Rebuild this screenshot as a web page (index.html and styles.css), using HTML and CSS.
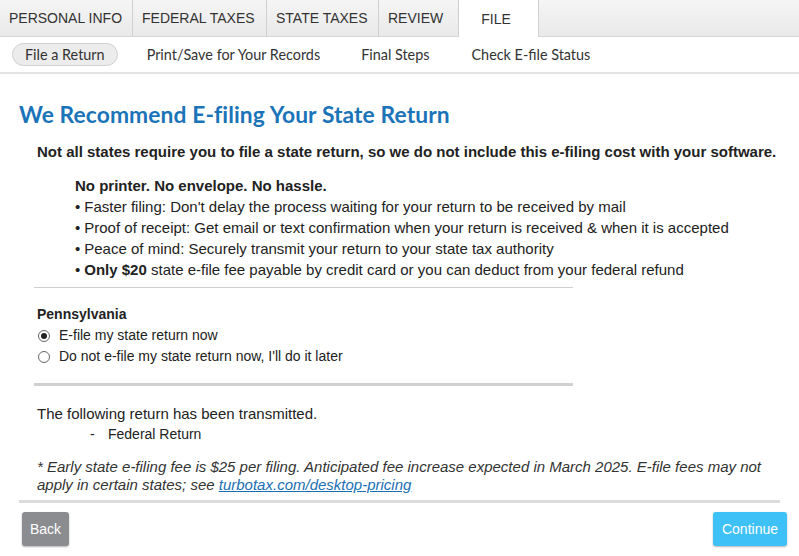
FILE: index.html
```html
<!DOCTYPE html>
<html lang="en">
<head>
<meta charset="utf-8">
<title>File</title>
<link rel="stylesheet" href="styles.css">
</head>
<body>
<nav class="tabs">
  <div class="tab">PERSONAL INFO</div>
  <div class="tab">FEDERAL TAXES</div>
  <div class="tab">STATE TAXES</div>
  <div class="tab">REVIEW</div>
  <div class="tab active">FILE</div>
  <div class="tab-fill"></div>
</nav>
<nav class="subnav">
  <span class="sub current">File a Return</span>
  <span class="sub">Print/Save for Your Records</span>
  <span class="sub">Final Steps</span>
  <span class="sub">Check E-file Status</span>
</nav>
<main class="content">
  <h1 class="title">We Recommend E-filing Your State Return</h1>
  <p class="lead">Not all states require you to file a state return, so we do not include this e-filing cost with your software.</p>
  <div class="benefits">
    <div class="benefits-head">No printer. No envelope. No hassle.</div>
    <ul class="bullets">
      <li>Faster filing: Don't delay the process waiting for your return to be received by mail</li>
      <li>Proof of receipt: Get email or text confirmation when your return is received &amp; when it is accepted</li>
      <li>Peace of mind: Securely transmit your return to your state tax authority</li>
      <li><b>Only $20</b> state e-file fee payable by credit card or you can deduct from your federal refund</li>
    </ul>
  </div>
  <hr class="rule thin">
  <div class="state">
    <div class="state-name">Pennsylvania</div>
    <label class="opt"><span class="radio checked"></span>E-file my state return now</label>
    <label class="opt"><span class="radio"></span>Do not e-file my state return now, I'll do it later</label>
  </div>
  <hr class="rule thick">
  <div class="transmitted">
    <div>The following return has been transmitted.</div>
    <div class="ret"><span class="dash">-</span>Federal Return</div>
  </div>
  <div class="note">
    <div>* Early state e-filing fee is $25 per filing. Anticipated fee increase expected in March 2025. E-file fees may not</div>
    <div>apply in certain states; see <a href="#">turbotax.com/desktop-pricing</a></div>
  </div>
</main>
<footer class="actions">
  <button class="btn back">Back</button>
  <button class="btn continue">Continue</button>
</footer>
</body>
</html>
```
FILE: styles.css
```css
* { box-sizing: border-box; }
html, body { margin: 0; padding: 0; background: #fff; }
body { font-family: "Liberation Sans", Arial, sans-serif; color: #222; width: 799px; height: 556px; overflow: hidden; }

.tabs { display: flex; height: 37px; background: linear-gradient(#f5f5f5, #e9e9e9); border-bottom: 1px solid #d6d6d6; }
.tab { display: flex; align-items: center; padding: 0 9px; font-size: 14px; color: #333; border-right: 1px solid #d0d0d0; height: 36px; }
.tab:nth-child(1) { width: 133px; }
.tab:nth-child(2) { width: 134px; }
.tab:nth-child(3) { width: 112px; }
.tab:nth-child(4) { width: 80px; }
.tab.active { width: 80px; background: #fff; justify-content: center; height: 37px; margin-bottom: -1px; padding-left: 4px; }
.tab-fill { flex: 1; }

.subnav { display: flex; align-items: center; height: 37px; padding-left: 12px; border-bottom: 2px solid #e4e4e4; font-family: "Lato", "Open Sans", sans-serif; font-size: 14.4px; color: #333; }
.sub { padding: 3px 12px; margin-right: 17px; }
.sub.current { background: #ececec; border: 1px solid #d0d0d0; border-radius: 12px; margin-right: 17px; padding: 2px 12px; }
.sub:nth-child(3) { margin-right: 18px; }

.content { padding: 0 19px; }
.title { font-family: "Lato", sans-serif; font-weight: 700; font-size: 22.8px; color: #1b74b8; margin: 27px 0 0; line-height: 26px; letter-spacing: 0.1px; }
.lead { font-weight: 700; font-size: 15px; margin: 16px 0 0 18px; line-height: 18px; color: #222; }
.benefits { margin: 14px 0 0 56px; font-size: 15px; line-height: 21px; color: #222; }
.benefits-head { font-weight: 700; }
.bullets { list-style: none; margin: 0; padding: 0; }
.bullets li::before { content: "\2022"; margin-right: 4px; }
.rule { border: 0; margin: 0 0 0 15px; width: 539px; }
.rule.thin { border-top: 1px solid #cfcfcf; margin-top: 7px; }
.rule.thick { border-top: 3px solid #d0d0d0; margin-top: 16px; }
.state { margin: 16px 0 0 18px; font-size: 14px; line-height: 21px; color: #222; }
.state-name { font-weight: 700; }
.opt { display: flex; align-items: center; height: 21px; }
.radio { width: 12px; height: 12px; border: 1px solid #666; border-radius: 50%; margin: 0 9px 0 1px; display: inline-flex; align-items: center; justify-content: center; }
.radio.checked::after { content: ""; width: 6px; height: 6px; border-radius: 50%; background: #222; }
.transmitted { margin: 17px 0 0 18px; font-size: 15px; line-height: 21px; color: #222; }
.ret { padding-left: 53px; font-size: 14px; height: 21px; }
.dash { display: inline-block; width: 18px; }
.note { font-style: italic; font-size: 15px; line-height: 17.5px; margin: 13px 0 0 18px; color: #333; white-space: nowrap; }
.note a { color: #1a6fb5; }

.actions { display: flex; justify-content: space-between; margin: 7px 19px 0; border-top: 3px solid #dcdcdc; padding: 9px 3px 0 3px; }
.btn { font-family: "Liberation Sans", Arial, sans-serif; font-size: 14px; color: #fff; border: 0; border-radius: 3px; height: 34px; box-shadow: 0 1px 2px rgba(0,0,0,0.3); }
.back { background: #8b8c90; width: 47px; padding: 0; }
.continue { background: #3dc1f6; width: 74px; padding: 0; margin-right: -10px; }
```
